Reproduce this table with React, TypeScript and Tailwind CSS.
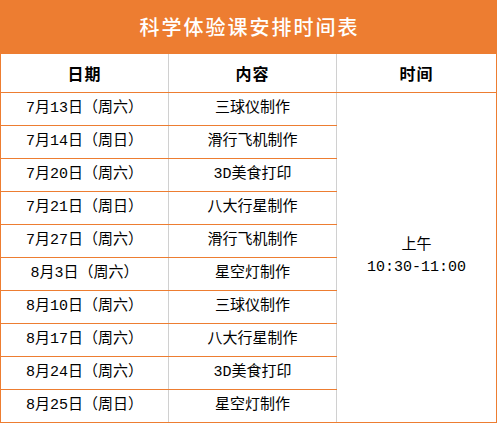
const rows = [
    { date: "7月13日（周六）", item: "三球仪制作" },
    { date: "7月14日（周日）", item: "滑行飞机制作" },
    { date: "7月20日（周六）", item: "3D美食打印" },
    { date: "7月21日（周日）", item: "八大行星制作" },
    { date: "7月27日（周六）", item: "滑行飞机制作" },
    { date: "8月3日（周六）", item: "星空灯制作" },
    { date: "8月10日（周六）", item: "三球仪制作" },
    { date: "8月17日（周六）", item: "八大行星制作" },
    { date: "8月24日（周六）", item: "3D美食打印" },
    { date: "8月25日（周日）", item: "星空灯制作" },
];

const mono = { fontFamily: '"Liberation Mono", "Noto Sans CJK SC", monospace' };

export default function App() {
    return (
        <div className="w-[497px] bg-white text-black" style={{ fontFamily: '"Noto Sans CJK SC", sans-serif' }}>
            <div className="h-[54px] bg-[#ED7D31] flex items-center justify-center text-white text-[20px] font-medium tracking-[2px] pl-[2px]">
                科学体验课安排时间表
            </div>
            <div className="border-x border-b border-[#ED7D31]">
                <div className="flex h-[39px] border-b border-[#ED7D31] text-[16px] font-bold">
                    <div className="w-[168px] border-r border-[#d0d0d0] flex items-center justify-center tracking-[1px]">日期</div>
                    <div className="w-[168px] border-r border-[#d0d0d0] flex items-center justify-center tracking-[1px]">内容</div>
                    <div className="flex-1 flex items-center justify-center tracking-[1px]">时间</div>
                </div>
                <div className="flex text-[15px]" style={mono}>
                    <div className="w-[336px]">
                        {rows.map((r, i) => (
                            <div
                                key={i}
                                className={
                                    i === rows.length - 1
                                        ? "flex h-[32px]"
                                        : "flex h-[33px] border-b border-[#ED7D31]"
                                }
                            >
                                <div className="w-[168px] border-r border-[#d0d0d0] flex items-center justify-center">{r.date}</div>
                                <div className="w-[168px] border-r border-[#d0d0d0] flex items-center justify-center">{r.item}</div>
                            </div>
                        ))}
                    </div>
                    <div className="flex-1 flex flex-col items-center justify-center leading-[22px] pb-[2px]">
                        <div>上午</div>
                        <div>10:30-11:00</div>
                    </div>
                </div>
            </div>
        </div>
    );
}
